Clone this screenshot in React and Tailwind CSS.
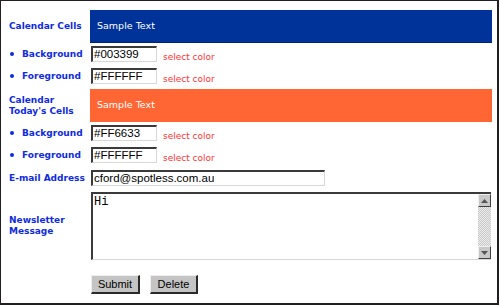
import React from "react";

const label = "text-[9px] font-bold text-[#0f2be0] leading-[11px]";
const font = { fontFamily: '"DejaVu Sans", Verdana, sans-serif' };

function Bullet({ children }) {
  return (
    <div className={`flex items-center ${label}`}>
      <span className="ml-[1px] w-[4px] h-[4px] rounded-full bg-[#0f2be0]" />
      <span className="ml-[8px]">{children}</span>
    </div>
  );
}

function Inp({ value, w }) {
  return (
    <div
      className={`${w} h-[16px] border-t-2 border-l-2 border-t-[#3a3a3a] border-l-[#3a3a3a] border-b border-r border-b-[#d8d8d8] border-r-[#d8d8d8] bg-white flex items-center pl-[1px] text-[11.5px] text-black leading-none box-border`}
      style={{ fontFamily: '"Liberation Sans", Arial, sans-serif' }}
    >
      {value}
    </div>
  );
}

function ColorRow({ name, value, mt }) {
  return (
    <div className={`flex items-center h-[16px] ${mt}`}>
      <div className="w-[82px] shrink-0">
        <Bullet>{name}</Bullet>
      </div>
      <Inp value={value} w="w-[66px]" />
      <span className="ml-[6px] mt-[7px] text-[9px] text-[#ff3333]">select color</span>
    </div>
  );
}

function Btn({ children, w }) {
  return (
    <div
      className={`${w} h-[19px] bg-[#c4c4c4] border-t border-l border-t-[#eeeeee] border-l-[#eeeeee] border-b-2 border-r-2 border-b-[#2a2a2a] border-r-[#2a2a2a] flex items-center justify-center text-[11px] text-black box-border`}
      style={{ fontFamily: '"Liberation Sans", Arial, sans-serif' }}
    >
      {children}
    </div>
  );
}

export default function App() {
  return (
    <div className="w-[500px] h-[306px] bg-white" style={font}>
      <div className="w-[499px] h-[305px] border-l border-t border-r-2 border-b-2 border-[#231f20] box-border pt-[9px] pl-[8px] flex flex-col">
        {/* Calendar Cells */}
        <div className="flex items-center h-[33px]">
          <div className={`w-[81px] shrink-0 ${label}`}>Calendar Cells</div>
          <div className="w-[402px] h-[33px] bg-[#003399] border-b border-[#00237a] flex items-center pl-[7px] text-[9.5px] text-white box-border">
            Sample Text
          </div>
        </div>
        <ColorRow name="Background" value="#003399" mt="mt-[3px]" />
        <ColorRow name="Foreground" value="#FFFFFF" mt="mt-[6px]" />

        {/* Today's cells */}
        <div className="flex items-center h-[33px] mt-[5px]">
          <div className={`w-[81px] shrink-0 ${label}`}>
            Calendar
            <br />
            Today's Cells
          </div>
          <div className="w-[402px] h-[33px] bg-[#ff6633] flex items-center pl-[7px] text-[9.5px] text-white box-border">
            Sample Text
          </div>
        </div>
        <ColorRow name="Background" value="#FF6633" mt="mt-[3px]" />
        <ColorRow name="Foreground" value="#FFFFFF" mt="mt-[6px]" />

        {/* Email */}
        <div className="flex items-center h-[16px] mt-[7px]">
          <div className={`w-[82px] shrink-0 ${label}`}>E-mail Address</div>
          <Inp value="cford@spotless.com.au" w="w-[234px]" />
        </div>

        {/* Newsletter */}
        <div className="flex items-center h-[68px] mt-[6px]">
          <div className={`w-[82px] shrink-0 ${label}`}>
            Newsletter
            <br />
            Message
          </div>
          <div className="w-[400px] h-[68px] border-t-2 border-l-2 border-t-[#3a3a3a] border-l-[#3a3a3a] border-b border-b-[#d8d8d8] bg-white flex box-border">
            <div
              className="flex-1 pl-[1px] pt-[2px] text-[12px] leading-[12px] text-black"
              style={{ fontFamily: '"Liberation Mono", "Courier New", monospace' }}
            >
              Hi
            </div>
            <div className="w-[13px] flex flex-col bg-[repeating-conic-gradient(#c8c8c8_0%_25%,#ececec_0%_50%)] bg-[length:2px_2px]">
              <div className="h-[13px] bg-[#c8c8c8] border-t border-l border-[#f0f0f0] border-b border-r border-b-[#404040] border-r-[#404040] flex items-center justify-center box-border">
                <svg width="7" height="4" viewBox="0 0 7 4">
                  <polygon points="3.5,0 7,4 0,4" fill="#555" />
                </svg>
              </div>
              <div className="flex-1" />
              <div className="h-[13px] bg-[#c8c8c8] border-t border-l border-[#f0f0f0] border-b border-r border-b-[#404040] border-r-[#404040] flex items-center justify-center box-border">
                <svg width="7" height="4" viewBox="0 0 7 4">
                  <polygon points="0,0 7,0 3.5,4" fill="#555" />
                </svg>
              </div>
            </div>
          </div>
        </div>

        {/* Buttons */}
        <div className="flex items-center mt-[15px] pl-[82px] gap-[10px]">
          <Btn w="w-[49px]">Submit</Btn>
          <Btn w="w-[48px]">Delete</Btn>
        </div>
      </div>
    </div>
  );
}
